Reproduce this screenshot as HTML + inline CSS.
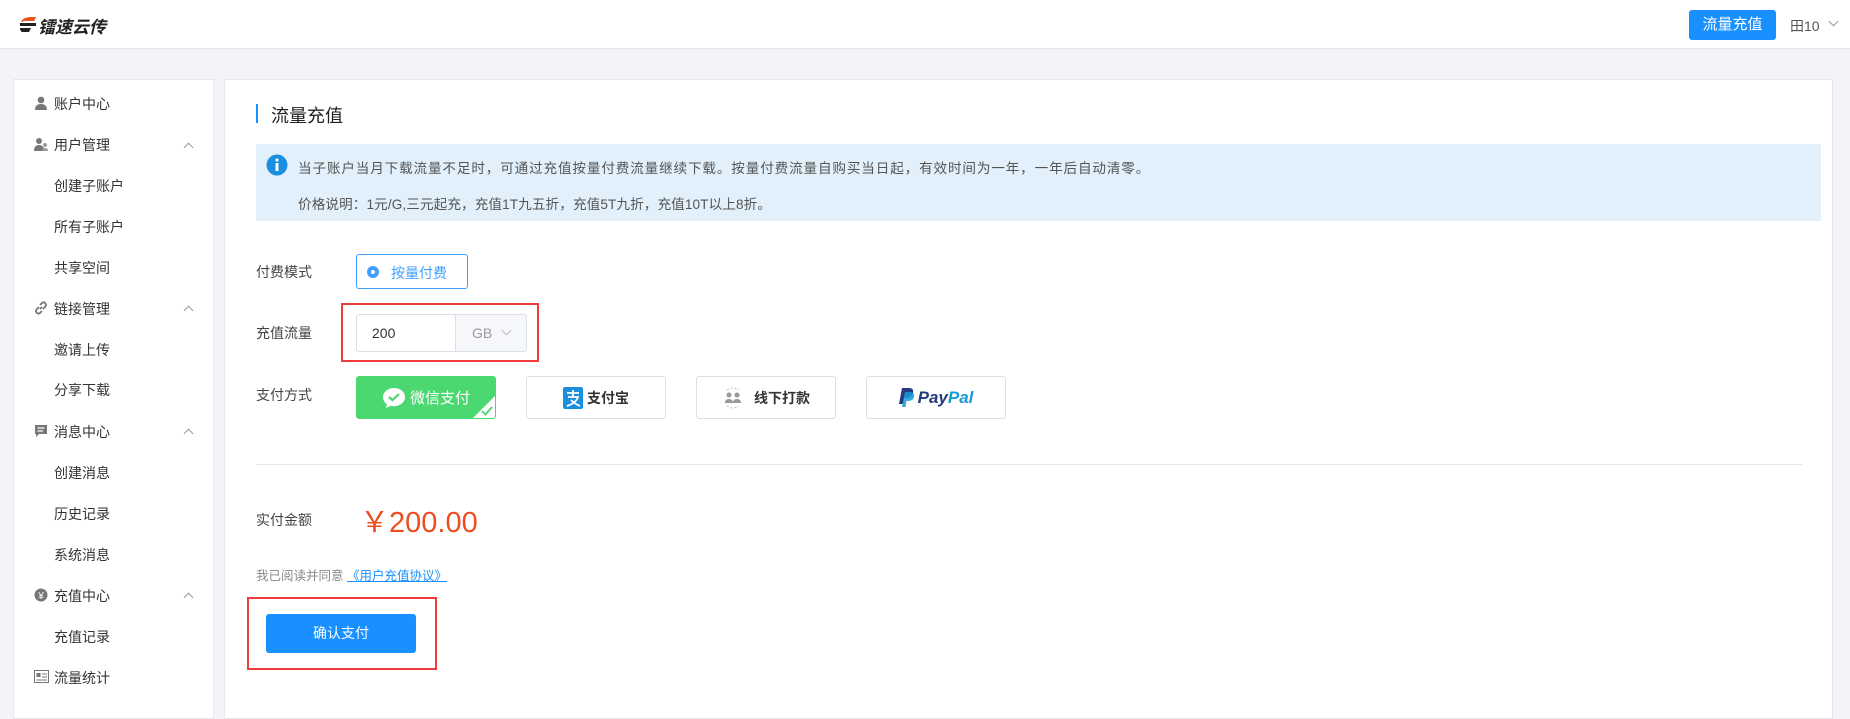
<!DOCTYPE html>
<html><head><meta charset="utf-8">
<style>
*{margin:0;padding:0;box-sizing:border-box}
body{width:1850px;height:699px;overflow:hidden;background:#f3f4f8;font-family:"Liberation Sans","Noto Sans CJK SC",sans-serif;color:#333;position:relative}
.a{position:absolute;white-space:nowrap}
.header{position:absolute;left:0;top:0;width:1850px;height:49px;background:#fff;border-bottom:1px solid #e4e6ec}
.side{position:absolute;left:13px;top:79px;width:201px;height:640px;background:#fff;border:1px solid #e6e8ee}
.main{position:absolute;left:224px;top:79px;width:1609px;height:640px;background:#fff;border:1px solid #e6e8ee}
.si{position:absolute;font-size:14px;color:#333;line-height:16px}
.chev{position:absolute;width:7px;height:7px;border-left:1px solid #999;border-top:1px solid #999;transform:rotate(45deg)}
.lbl{font-size:14px;color:#444;line-height:16px}
.pay{position:absolute;top:376px;width:140px;height:43px;border:1px solid #dcdfe6;border-radius:3px;background:#fff;font-size:14px;font-weight:bold;color:#333;display:flex;align-items:center;justify-content:center}
</style></head><body>
<div class="header">
  <svg class="a" style="left:19px;top:16px" width="18" height="17" viewBox="0 0 18 17"><path d="M2 6 Q4 1 12 1 L17 1 L15 5 L6 5 Z" fill="#e9531f"/><rect x="1" y="7" width="16" height="3" fill="#222"/><path d="M1 12 L12 12 L10 16 L3 16 Q1 15 1 12Z" fill="#222"/></svg>
  <div class="a" style="left:38px;top:13px;font-size:17px;font-weight:bold;font-style:italic;color:#222">镭速云传</div>
  <div class="a" style="left:1689px;top:10px;width:87px;height:30px;background:#1890ff;border-radius:3px;color:#fff;font-size:15px;line-height:30px;text-align:center">流量充值</div>
  <div class="a" style="left:1790px;top:16px;font-size:14px;color:#555">田10</div>
  <div class="chev" style="left:1830px;top:18px;transform:rotate(225deg)"></div>
</div>
<div class="side"></div>
<div class="main"></div>

<svg class="a" style="left:34px;top:96px" width="14" height="14" viewBox="0 0 14 14"><circle cx="7" cy="4" r="3.3" fill="#777"/><path d="M1 14 Q1 8 7 8 Q13 8 13 14Z" fill="#777"/></svg>
<div class="si" style="left:54px;top:96px">账户中心</div>
<svg class="a" style="left:34px;top:137px" width="15" height="14" viewBox="0 0 15 14"><circle cx="5" cy="4" r="3" fill="#777"/><path d="M0 14 Q0 8 5 8 Q10 8 10 14Z" fill="#777"/><circle cx="11" cy="8" r="2" fill="#999"/><path d="M8 14 Q8 11 11 11 Q14 11 14 14Z" fill="#999"/></svg>
<div class="si" style="left:54px;top:137px">用户管理</div>
<div class="chev" style="left:185px;top:144px"></div>
<div class="si" style="left:54px;top:178px">创建子账户</div>
<div class="si" style="left:54px;top:219px">所有子账户</div>
<div class="si" style="left:54px;top:260px">共享空间</div>
<svg class="a" style="left:34px;top:301px" width="14" height="14" viewBox="0 0 14 14" fill="none" stroke="#777" stroke-width="1.8"><path d="M6 8 L8 6"/><path d="M5 6 L3 8 Q1 10 3 12 Q4.5 13.5 6.5 11.5 L8 10"/><path d="M9 8 L11 6 Q13 4 11 2 Q9.5 0.5 7.5 2.5 L6 4"/></svg>
<div class="si" style="left:54px;top:301px">链接管理</div>
<div class="chev" style="left:185px;top:307px"></div>
<div class="si" style="left:54px;top:342px">邀请上传</div>
<div class="si" style="left:54px;top:382px">分享下载</div>
<svg class="a" style="left:34px;top:424px" width="14" height="14" viewBox="0 0 14 14"><path d="M1 1 H13 V10 H5 L2 13 V10 H1Z" fill="#777"/><path d="M3.5 4H10.5M3.5 7H9" stroke="#fff" stroke-width="1.2"/></svg>
<div class="si" style="left:54px;top:424px">消息中心</div>
<div class="chev" style="left:185px;top:430px"></div>
<div class="si" style="left:54px;top:465px">创建消息</div>
<div class="si" style="left:54px;top:506px">历史记录</div>
<div class="si" style="left:54px;top:547px">系统消息</div>
<svg class="a" style="left:34px;top:588px" width="14" height="14" viewBox="0 0 14 14"><circle cx="7" cy="7" r="6.5" fill="#777"/><text x="7" y="11" font-size="10" fill="#fff" text-anchor="middle" font-family="Liberation Sans">¥</text></svg>
<div class="si" style="left:54px;top:588px">充值中心</div>
<div class="chev" style="left:185px;top:594px"></div>
<div class="si" style="left:54px;top:629px">充值记录</div>
<svg class="a" style="left:34px;top:670px" width="15" height="13" viewBox="0 0 15 13"><rect x="0.5" y="0.5" width="14" height="12" fill="none" stroke="#777"/><rect x="2.5" y="3" width="4" height="4" fill="#777"/><path d="M8 4H13M8 7H13M2.5 10H13" stroke="#777"/></svg>
<div class="si" style="left:54px;top:670px">流量统计</div>

<div class="a" style="left:256px;top:104px;width:2px;height:19px;background:#1890ff"></div>
<div class="a" style="left:271px;top:102px;font-size:18px;color:#222">流量充值</div>
<div class="a" style="left:256px;top:144px;width:1565px;height:77px;background:#e1f0fa"></div>
<svg class="a" style="left:266px;top:154px" width="22" height="22" viewBox="0 0 22 22"><circle cx="11" cy="11" r="10.5" fill="#1a8fe0"/><circle cx="11" cy="6" r="1.6" fill="#fff"/><rect x="9.5" y="9" width="3" height="8" fill="#fff"/></svg>
<div class="a" style="left:298px;top:157px;font-size:13.6px;color:#555;letter-spacing:0.85px">当子账户当月下载流量不足时，可通过充值按量付费流量继续下载。按量付费流量自购买当日起，有效时间为一年，一年后自动清零。</div>
<div class="a" style="left:298px;top:193px;font-size:13.6px;color:#555;letter-spacing:0.1px">价格说明：1元/G,三元起充，充值1T九五折，充值5T九折，充值10T以上8折。</div>

<div class="a lbl" style="left:256px;top:264px">付费模式</div>
<div class="a" style="left:356px;top:254px;width:112px;height:35px;border:1px solid #409eff;border-radius:3px"></div>
<div class="a" style="left:367px;top:266px;width:12px;height:12px;border-radius:50%;background:#409eff"></div>
<div class="a" style="left:371px;top:270px;width:4px;height:4px;border-radius:50%;background:#fff"></div>
<div class="a" style="left:391px;top:263px;font-size:14px;color:#409eff">按量付费</div>

<div class="a lbl" style="left:256px;top:325px">充值流量</div>
<div class="a" style="left:341px;top:303px;width:198px;height:59px;border:2.5px solid #ef3b3b"></div>
<div class="a" style="left:356px;top:314px;width:100px;height:38px;border:1px solid #dcdfe6;border-radius:3px 0 0 3px;background:#fff;font-size:14px;line-height:36px;padding-left:15px;color:#333">200</div>
<div class="a" style="left:455px;top:314px;width:72px;height:38px;border:1px solid #dcdfe6;border-radius:0 3px 3px 0;background:#f5f7fa;font-size:14px;line-height:36px;padding-left:16px;color:#999">GB</div>
<div class="chev" style="left:503px;top:327px;transform:rotate(225deg);border-color:#bbb"></div>

<div class="a lbl" style="left:256px;top:387px">支付方式</div>
<div class="pay" style="left:356px;background:#4cd870;border-color:#4cd870;color:#fff;font-weight:normal;font-size:15px;overflow:hidden">
  <svg width="24" height="22" viewBox="0 0 24 22" style="margin-right:4px"><path d="M12 1C5.9 1 1 5.1 1 10.2c0 2.8 1.5 5.3 3.9 7L4 21l4.5-2.3c1.1.3 2.3.5 3.5.5 6.1 0 11-4.1 11-9.2S18.1 1 12 1z" fill="#fff"/><path d="M7 10 L10.5 13 L17 7" stroke="#4cd870" stroke-width="2.2" fill="none"/></svg>微信支付
  <div style="position:absolute;right:0;bottom:0;width:0;height:0;border-left:22px solid transparent;border-bottom:22px solid #fff"></div>
  <svg style="position:absolute;right:2px;bottom:2px" width="12" height="10" viewBox="0 0 12 10"><path d="M1 5 L4.5 8.5 L11 1" stroke="#4cd870" stroke-width="1.8" fill="none"/></svg>
</div>
<div class="pay" style="left:526px">
  <svg width="20" height="22" viewBox="0 0 20 22" style="margin-right:4px"><rect width="20" height="22" rx="2" fill="#1a8fe0"/><path d="M4 6H16M10 3V10M5 10H15Q13 16 4 19M8 13Q12 17 17 19" stroke="#fff" stroke-width="1.8" fill="none"/></svg>支付宝</div>
<div class="pay" style="left:696px">
  <svg width="22" height="22" viewBox="0 0 22 22" style="margin-right:10px"><circle cx="7" cy="8" r="2.5" fill="#999"/><circle cx="15" cy="8" r="2.5" fill="#999"/><path d="M3 16Q3 12 7 12Q11 12 11 16ZM11 16Q11 12 15 12Q19 12 19 16Z" fill="#999"/><path d="M5 3Q11 -1 17 3M5 19Q11 23 17 19" stroke="#bbb" fill="none" stroke-dasharray="2 2"/></svg>线下打款</div>
<div class="pay" style="left:866px;font-style:italic;font-size:17px;font-family:'Liberation Sans',sans-serif">
  <svg width="16" height="22" viewBox="0 0 16 22" style="margin-right:3px"><path d="M3 1H10Q15 1 14 6Q13 11 7 11H5L4 17H0Z" fill="#253b80"/><path d="M6 5H12Q16 6 15 10Q14 14 9 14H7.5L6.5 20H3Z" fill="#179bd7" opacity="0.85"/></svg><span style="color:#253b80">Pay</span><span style="color:#179bd7">Pal</span></div>

<div class="a" style="left:256px;top:464px;width:1546px;height:1px;background:#e4e6ea"></div>
<div class="a lbl" style="left:256px;top:512px">实付金额</div>
<div class="a" style="left:360px;top:499px;font-size:29px;color:#ec4f1d">￥200.00</div>
<div class="a" style="left:256px;top:565px;font-size:12.5px;color:#888">我已阅读并同意 <span style="color:#1890ff;text-decoration:underline">《用户充值协议》</span></div>
<div class="a" style="left:247px;top:597px;width:190px;height:73px;border:2.5px solid #ef3b3b"></div>
<div class="a" style="left:266px;top:614px;width:150px;height:39px;background:#1890ff;border-radius:3px;color:#fff;font-size:14px;line-height:39px;text-align:center">确认支付</div>
</body></html>
